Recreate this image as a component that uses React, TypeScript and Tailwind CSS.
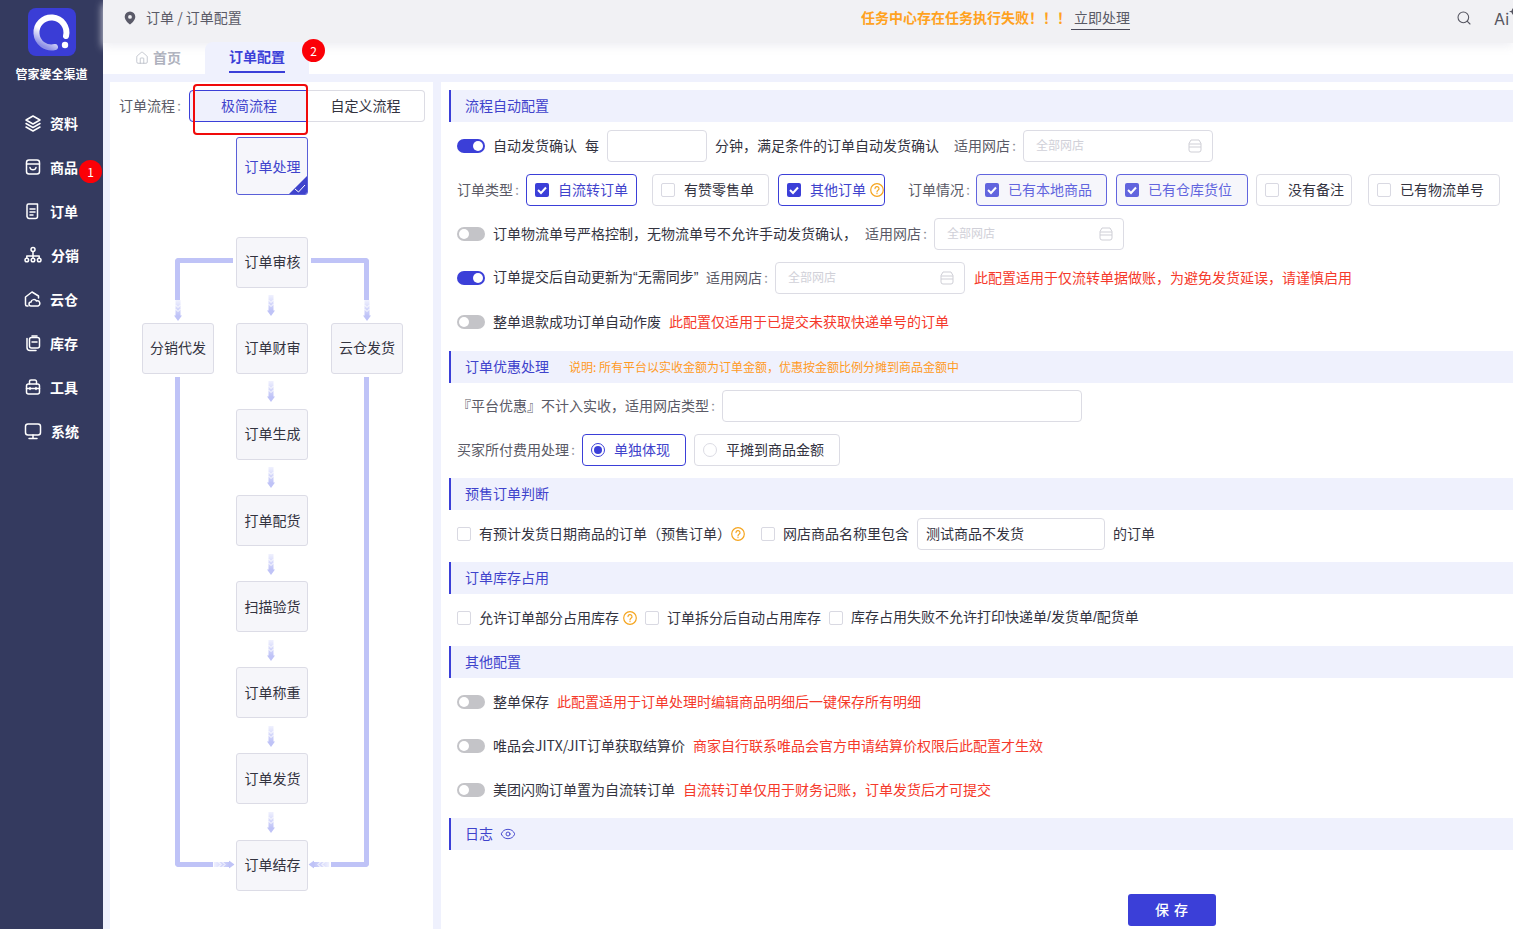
import React from "react";
import { Eye, House, Search } from "lucide-react";

const IC = "w-[18px] h-[18px] shrink-0";
const Logo = () => (
  <svg viewBox="0 0 48 48" className="w-12 h-12">
    <defs>
      <linearGradient id="lg" x1="0.8" y1="0.1" x2="0.3" y2="1">
        <stop offset="0" stopColor="#fff" />
        <stop offset="0.55" stopColor="#fff" />
        <stop offset="1" stopColor="#8d8fe6" />
      </linearGradient>
    </defs>
    <rect width="48" height="48" rx="8" fill="#3a3dd6" />
    <path d="M38 28A15 15 0 1 0 27 39" fill="none" stroke="url(#lg)" strokeWidth="6" strokeLinecap="round" />
    <circle cx="37" cy="37" r="3.2" fill="#fff" />
  </svg>
);

const icons: Record<string, React.ReactNode> = {
  资料: <><path d="M9 2 16 6 9 10 2 6Z" /><path d="M2 9.5 9 13.5 16 9.5" /><path d="M2 13 9 17 16 13" /></>,
  商品: <><rect x="2.5" y="2" width="13" height="14" rx="2.5" /><path d="M2.5 6H15.5" /><path d="M6 9.5C6.5 12.5 11.5 12.5 12 9.5" /></>,
  订单: <><path d="M4.5 2H13.5V14.5A2 2 0 0 1 11.5 16.5H5A2.5 2.5 0 0 1 3 14.5V3.5A1.5 1.5 0 0 1 4.5 2Z" /><path d="M6 7H11M6 10H11M6 13H9" /></>,
  分销: <><circle cx="9" cy="3.5" r="2" /><circle cx="2.8" cy="14" r="1.8" /><circle cx="9" cy="14" r="1.8" /><circle cx="15.2" cy="14" r="1.8" /><path d="M9 5.5V12M2.8 12V10H15.2V12" /></>,
  云仓: <><path d="M4 16H3A1.5 1.5 0 0 1 1.5 14.5V7L8 2 14.5 6V8" /><path d="M7 16A2 2 0 0 1 7 12 3 3 0 0 1 12.5 11 2.5 2.5 0 0 1 14 16Z" /></>,
  库存: <><path d="M3 4.5V13.5A3 3 0 0 0 6 16.5H12" /><rect x="5.5" y="3.5" width="10" height="10.5" rx="2" /><path d="M8 2H13M8 8H13" /></>,
  工具: <><rect x="2.5" y="6" width="13" height="10" rx="2" /><path d="M5.5 6V3.5A1.5 1.5 0 0 1 7 2H11A1.5 1.5 0 0 1 12.5 3.5V6" /><path d="M2.5 10.5H15.5M6 9.5V11.5M12 9.5V11.5" /></>,
  系统: <><rect x="1.5" y="2" width="15" height="11" rx="2.5" /><path d="M9 13V16M5 16.5H13" /></>,
};

function NavItem({ name, badge }: { name: string; badge?: boolean }) {
  const wide = name === "分销" || name === "系统";
  return (
    <div className={`relative flex items-center h-11 pl-[24px] ${wide ? "gap-[9px]" : "gap-2"}`}>
      <svg viewBox="0 0 18 18" className={IC} fill="none" stroke="#fff" strokeWidth="1.5" strokeLinejoin="round" strokeLinecap="round">
        {icons[name]}
      </svg>
      <span className="text-[14px] font-bold text-white">{name}</span>
      {badge && (
        <span className="absolute left-[79px] top-[15px] w-[23px] h-[23px] rounded-full bg-[#fb0007] text-white text-[12px] flex items-center justify-center">1</span>
      )}
    </div>
  );
}

function FlowArrow({ className }: { className: string }) {
  const id = React.useId();
  return (
    <svg viewBox="0 0 8 21" className={`absolute w-2 h-[21px] ${className}`}>
      <defs>
        <linearGradient id={id} x1="0" y1="0" x2="0" y2="1">
          <stop offset="0" stopColor="#f0f1fe" />
          <stop offset="0.75" stopColor="#bfc3f7" />
        </linearGradient>
      </defs>
      <path d="M1.5 0H6.5V15.5H8L4 21 0 15.5H1.5Z" fill={`url(#${id})`} />
      <path d="M1.5 5 4 7.5 6.5 5M1.5 9 4 11.5 6.5 9" fill="none" stroke="#fff" strokeWidth="1" />
    </svg>
  );
}

function Node({ label, className, pad = "pb-[2px]" }: { label: string; className: string; pad?: string }) {
  return (
    <div className={`absolute w-[72px] h-[51px] rounded-[3px] border border-[#dcdce6] bg-[#f6f6fa] flex items-center justify-center text-[14px] text-[#33333f] ${pad} ${className}`}>
      {label}
    </div>
  );
}

function Section({ children, className = "" }: { children: React.ReactNode; className?: string }) {
  return (
    <div className={`h-8 pb-[2px] border-l-2 border-[#3b3fd8] bg-[#eff1fd] pl-[14px] flex items-center text-[14px] text-[#3f43cc] ${className}`}>
      {children}
    </div>
  );
}

function Toggle({ on }: { on?: boolean }) {
  return (
    <span className={`relative ml-2 w-[28px] h-[14px] rounded-full shrink-0 ${on ? "bg-[#3b3fd8]" : "bg-[#c4c4c8]"}`}>
      <span className={`absolute top-[2px] w-[10px] h-[10px] rounded-full bg-white ${on ? "right-[2px]" : "left-[2px]"}`} />
    </span>
  );
}

function Check({ on, soft }: { on?: boolean; soft?: boolean }) {
  if (!on) return <div className="w-[14px] h-[14px] rounded-[2px] border border-[#d9d9e2] bg-white shrink-0" />;
  return (
    <div className={`w-[14px] h-[14px] rounded-[2px] shrink-0 flex items-center justify-center ${soft ? "bg-[#6265de]" : "bg-[#3b3fd8]"}`}>
      <svg viewBox="0 0 14 14" className="w-[14px] h-[14px]" fill="none" stroke="#fff" strokeWidth="2"><path d="M3 7 6 10 11 4.5" /></svg>
    </div>
  );
}

const HelpIcon = ({ className }: { className: string }) => (
  <svg viewBox="0 0 14 14" className={`w-[14px] h-[14px] shrink-0 ${className}`} fill="none" stroke="#f5a51f" strokeWidth="1.2">
    <circle cx="7" cy="7" r="6.3" />
    <path d="M5 5.6A2 2 0 1 1 8 7.3C7.3 7.7 7 8 7 8.9" strokeLinecap="round" />
    <circle cx="7" cy="10.6" r="0.7" fill="#f5a51f" stroke="none" />
  </svg>
);

function CheckBox({ label, w, on, soft, help, ml }: { label: string; w: string; on?: boolean; soft?: boolean; help?: boolean; ml: string }) {
  const tone = soft
    ? "border-[#6265de] bg-[#f6f6fb] text-[#6265de]"
    : on
      ? "border-[#3b3fd8] bg-white text-[#3f43cc]"
      : "border-[#dcdce4] bg-white text-[#33333f]";
  return (
    <div className={`h-8 rounded-[4px] border pl-[8px] flex items-center shrink-0 ${w} ${ml} ${tone}`}>
      <Check on={on} soft={soft} />
      <span className="ml-[9px] pb-[2px]">{label}</span>
      {help && <HelpIcon className="ml-[4px]" />}
    </div>
  );
}

const Store = () => (
  <svg viewBox="0 0 14 14" className="w-[14px] h-[14px]" fill="none" stroke="#cfcfd6" strokeWidth="1">
    <path d="M3 1H11L13 4.5V11A2 2 0 0 1 11 13H3A2 2 0 0 1 1 11V4.5Z" />
    <path d="M1 5H13M1 8H13" />
  </svg>
);

function ShopSelect({ ml }: { ml: string }) {
  return (
    <div className={`w-[190px] h-8 rounded-[4px] border border-[#dcdce4] bg-white pl-3 pr-[10px] flex items-center justify-between shrink-0 ${ml}`}>
      <span className="text-[12px] text-[#d0d0d8] pb-[2px]">全部网店</span>
      <Store />
    </div>
  );
}

const Row = ({ children }: { children: React.ReactNode }) => (
  <div className="h-11 flex items-center whitespace-nowrap text-[14px] text-[#33333f] [&>span]:pb-[2px]">{children}</div>
);
const Warn = ({ children, ml }: { children: React.ReactNode; ml: string }) => (
  <span className={`text-[#f5392b] ${ml}`}>{children}</span>
);
const Colon = () => <span className="ml-[2px] font-['Inter',sans-serif] text-[#8a8a94]">:</span>;
const Label = ({ children, className }: { children: React.ReactNode; className: string }) => (
  <span className={`text-[#5a5a66] shrink-0 ${className}`}>{children}<Colon /></span>
);
const Slash = () => <span className="font-['Liberation_Sans',sans-serif]">/</span>;

export default function App() {
  return (
    <div className="relative w-[1513px] h-[929px] overflow-hidden flex bg-[#eff1fd] whitespace-nowrap font-['Noto_Sans_CJK_SC','Liberation_Sans',sans-serif]">
      <aside className="w-[103px] shrink-0 bg-[#343a5f] flex flex-col">
        <div className="flex flex-col items-center pt-2">
          <Logo />
          <div className="mt-[9px] text-[12px] leading-[18px] font-bold text-white">管家婆全渠道</div>
        </div>
        <nav className="mt-[18px]">
          {["资料", "商品", "订单", "分销", "云仓", "库存", "工具", "系统"].map((n) => (
            <NavItem key={n} name={n} badge={n === "商品"} />
          ))}
        </nav>
      </aside>

      <main className="flex-1 min-w-0 flex flex-col">
        <header className="relative z-10 h-[43px] shrink-0 bg-[#f1f1f4] flex items-center pl-[20px] pb-[8px] text-[14px] shadow-[0_4px_8px_rgba(240,240,244,0.9)] overflow-x-clip">
          <svg viewBox="0 0 14 14" className="w-[14px] h-[14px] shrink-0">
            <path fillRule="evenodd" fill="#5a5a68" d="M7 .5A5.3 5.3 0 0 1 12.3 5.8C12.3 9 8.7 12.4 7 13.5 5.3 12.4 1.7 9 1.7 5.8A5.3 5.3 0 0 1 7 .5ZM7 4A1.9 1.9 0 1 0 7 7.8 1.9 1.9 0 0 0 7 4Z" />
          </svg>
          <span className="ml-[9px] w-[95px] text-[#5a5a66]">订单 / 订单配置</span>
          <span className="ml-[620px] font-bold text-[#ffa21f] w-[210px]">任务中心存在任务执行失败！！！</span>
          <span className="self-start mt-[7px] h-[23px] leading-[20px] pl-[3px] w-[60px] text-[#5a5a66] border-b border-[#4a4a5a]">立即处理</span>
          <Search size={16} strokeWidth={1.6} className="ml-[326px] text-[#555560] shrink-0" />
          <span className="ml-[22px] mt-[2px] text-[16px] leading-none text-[#555560] font-['Inter',sans-serif]">Ai</span>
          <svg viewBox="0 0 8 8" className="w-[7px] h-[7px] shrink-0 mb-[12px]"><path d="M4 0 5 3 8 4 5 5 4 8 3 5 0 4 3 3Z" fill="#555560" /></svg>
        </header>

        <div className="h-[31px] shrink-0 bg-white flex items-end">
          <div className="flex items-center gap-[4px] pb-[2px] ml-[32px] w-[70px] h-[31px] text-[14px] font-bold text-[#aeb1bd]">
            <House size={14} strokeWidth={1.2} />
            <span>首页</span>
          </div>
          <div className="relative z-20 w-[104px] h-[32px] rounded-t-[8px] bg-[#eff1fd] flex justify-center">
            <span className="h-[31px] leading-[29px] text-[14px] font-bold text-[#3b3fd8] border-b-2 border-[#3b3fd8]">订单配置</span>
            <span className="absolute left-[97px] -top-[3px] w-[23px] h-[23px] rounded-full bg-[#fb0007] text-white text-[12px] flex items-center justify-center">2</span>
          </div>
        </div>

        <div className="flex-1 min-h-0 flex gap-2 pl-[7px] pt-2">
          <section className="relative w-[323px] shrink-0 bg-white">
            <div className="flex items-center h-8 mt-2 pl-[9px] text-[14px]">
              <span className="w-[70px] pb-[2px] text-[#5a5a66] shrink-0">订单流程<Colon /></span>
              <div className="w-[118px] h-8 pb-[2px] pl-[2px] rounded-l-[4px] border border-[#3b3fd8] bg-[#eff1fd] text-[#3f43cc] flex items-center justify-center">极简流程</div>
              <div className="w-[118px] h-8 pb-[2px] rounded-r-[4px] border border-l-0 border-[#dcdce4] text-[#33333f] flex items-center justify-center">自定义流程</div>
            </div>
            <div className="absolute left-[83px] top-[2px] w-[115px] h-[51px] rounded-[4px] border-2 border-[#f00a0a]" />

            <div className="relative h-[760px] mt-2">
              <div className="absolute left-[65px] top-[128px] w-[58px] h-[42px] border-l-[5px] border-t-[5px] border-[#bfc3f7] rounded-tl-[4px]" />
              <div className="absolute left-[201px] top-[128px] w-[58px] h-[42px] border-r-[5px] border-t-[5px] border-[#bfc3f7] rounded-tr-[4px]" />
              <div className="absolute left-[65px] top-[247px] w-[38px] h-[490px] border-l-[5px] border-b-[5px] border-[#bfc3f7] rounded-bl-[4px]" />
              <div className="absolute left-[221px] top-[247px] w-[38px] h-[490px] border-r-[5px] border-b-[5px] border-[#bfc3f7] rounded-br-[4px]" />

              <div className="absolute left-[126px] top-[7px] w-[72px] h-[58px] pl-[1px] rounded-[3px] border border-[#5a5fd8] bg-[#f6f6fb] flex items-center justify-center text-[14px] text-[#3f43cc] overflow-hidden">
                订单处理
                <svg viewBox="0 0 18 18" className="absolute right-0 bottom-0 w-[18px] h-[18px]">
                  <path d="M18 0V18H0Z" fill="#3f43cc" />
                  <path d="M6 13 9.5 16 16 9" fill="none" stroke="#fff" strokeWidth="1" />
                </svg>
              </div>
              <Node label="订单审核" className="left-[126px] top-[107px] pl-[1px]" />
              <Node label="分销代发" className="left-[32px] top-[193px]" />
              <Node label="订单财审" className="left-[126px] top-[193px] pl-[1px]" />
              <Node label="云仓发货" className="left-[221px] top-[193px]" />
              <Node label="订单生成" className="left-[126px] top-[279px] pl-[1px]" />
              <Node label="打单配货" pad="pb-0" className="left-[126px] top-[365px] pl-[1px]" />
              <Node label="扫描验货" pad="pb-0" className="left-[126px] top-[451px] pl-[1px]" />
              <Node label="订单称重" pad="pb-0" className="left-[126px] top-[537px] pl-[1px]" />
              <Node label="订单发货" pad="pb-0" className="left-[126px] top-[623px] pl-[1px]" />
              <Node label="订单结存" className="left-[126px] top-[710px] pl-[1px]" />

              <FlowArrow className="left-[157px] top-[165px]" />
              <FlowArrow className="left-[157px] top-[251px]" />
              <FlowArrow className="left-[157px] top-[337px]" />
              <FlowArrow className="left-[157px] top-[424px]" />
              <FlowArrow className="left-[157px] top-[510px]" />
              <FlowArrow className="left-[157px] top-[596px]" />
              <FlowArrow className="left-[157px] top-[682px]" />
              <FlowArrow className="left-[64px] top-[170px]" />
              <FlowArrow className="left-[253px] top-[170px]" />
              <FlowArrow className="left-[110px] top-[724px] -rotate-90" />
              <FlowArrow className="left-[205px] top-[724px] rotate-90" />
            </div>
          </section>

          <section className="flex-1 min-w-0 bg-white pl-2 pt-2">
            <Section>流程自动配置</Section>
            <div className="mt-[2px]">
              <Row>
                <Toggle on />
                <span className="ml-2">自动发货确认</span>
                <span className="ml-2">每</span>
                <span className="ml-2 w-[100px] h-8 rounded-[4px] border border-[#dcdce4] shrink-0" />
                <span className="ml-2">分钟，满足条件的订单自动发货确认</span>
                <Label className="ml-[15px] w-[69px]">适用网店</Label>
                <ShopSelect ml="" />
              </Row>
              <Row>
                <Label className="ml-[8px] w-[69px]">订单类型</Label>
                <CheckBox label="自流转订单" w="w-[111px]" on ml="" />
                <CheckBox label="有赞零售单" w="w-[117px]" ml="ml-[15px]" />
                <CheckBox label="其他订单" w="w-[107px]" on help ml="ml-[9px]" />
                <Label className="ml-[23px] w-[68px]">订单情况</Label>
                <CheckBox label="已有本地商品" w="w-[131px]" on soft ml="" />
                <CheckBox label="已有仓库货位" w="w-[132px]" on soft ml="ml-[9px]" />
                <CheckBox label="没有备注" w="w-[96px]" ml="ml-2" />
                <CheckBox label="已有物流单号" w="w-[132px]" ml="ml-4" />
              </Row>
              <Row>
                <Toggle />
                <span className="ml-2">订单物流单号严格控制，无物流单号不允许手动发货确认，</span>
                <Label className="ml-[8px] w-[69px]">适用网店</Label>
                <ShopSelect ml="" />
              </Row>
              <Row>
                <Toggle on />
                <span className="ml-2 w-[205px]">
                  订单提交后自动更新为<span className="font-['Liberation_Sans',sans-serif]">“</span>无需同步<span className="font-['Liberation_Sans',sans-serif]">”</span>
                </span>
                <Label className="ml-[8px] w-[69px]">适用网店</Label>
                <ShopSelect ml="" />
                <Warn ml="ml-[9px]">此配置适用于仅流转单据做账，为避免发货延误，请谨慎启用</Warn>
              </Row>
              <Row>
                <Toggle />
                <span className="ml-2">整单退款成功订单自动作废</span>
                <Warn ml="ml-2">此配置仅适用于已提交未获取快递单号的订单</Warn>
              </Row>
            </div>

            <Section className="mt-[7px]">
              订单优惠处理
              <span className="ml-5 mt-[2px] text-[12px] text-[#ff9a1f]">说明: 所有平台以实收金额为订单金额，优惠按金额比例分摊到商品金额中</span>
            </Section>
            <div className="mt-[1px]">
              <Row>
                <Label className="ml-[8px] w-[265px]">『平台优惠』不计入实收，适用网店类型</Label>
                <span className="w-[360px] h-8 rounded-[4px] border border-[#dcdce4]" />
              </Row>
              <Row>
                <Label className="ml-[8px] w-[125px]">买家所付费用处理</Label>
                <div className="w-[104px] h-8 rounded-[4px] border border-[#3b3fd8] pl-[8px] flex items-center text-[#3f43cc]">
                  <div className="w-[14px] h-[14px] rounded-full border border-[#3b3fd8] flex items-center justify-center">
                    <div className="w-2 h-2 rounded-full bg-[#3b3fd8]" />
                  </div>
                  <span className="ml-[9px] pb-[2px]">单独体现</span>
                </div>
                <div className="ml-2 w-[146px] h-8 rounded-[4px] border border-[#dcdce4] pl-[8px] flex items-center">
                  <div className="w-[14px] h-[14px] rounded-full border border-[#dcdce4]" />
                  <span className="ml-[9px] pb-[2px]">平摊到商品金额</span>
                </div>
              </Row>
            </div>

            <Section className="mt-[6px]">预售订单判断</Section>
            <div className="mt-[2px]">
              <Row>
                <div className="ml-2"><Check /></div>
                <span className="ml-2">有预计发货日期商品的订单（预售订单）</span>
                <HelpIcon className="" />
                <div className="ml-4"><Check /></div>
                <span className="ml-2">网店商品名称里包含</span>
                <span className="ml-2 w-[188px] h-8 rounded-[4px] border border-[#dcdce4] pl-[8px] flex items-center">测试商品不发货</span>
                <span className="ml-2">的订单</span>
              </Row>
            </div>

            <Section className="mt-[6px]">订单库存占用</Section>
            <div className="mt-[2px]">
              <Row>
                <div className="ml-2"><Check /></div>
                <span className="ml-2">允许订单部分占用库存</span>
                <HelpIcon className="ml-[4px]" />
                <div className="ml-2"><Check /></div>
                <span className="ml-2">订单拆分后自动占用库存</span>
                <div className="ml-2"><Check /></div>
                <span className="ml-2">库存占用失败不允许打印快递单<Slash />发货单<Slash />配货单</span>
              </Row>
            </div>

            <Section className="mt-[6px]">其他配置</Section>
            <div className="mt-[2px]">
              <Row>
                <Toggle />
                <span className="ml-2">整单保存</span>
                <Warn ml="ml-2">此配置适用于订单处理时编辑商品明细后一键保存所有明细</Warn>
              </Row>
              <Row>
                <Toggle />
                <span className="ml-2">唯品会JITX/JIT订单获取结算价</span>
                <Warn ml="ml-2">商家自行联系唯品会官方申请结算价权限后此配置才生效</Warn>
              </Row>
              <Row>
                <Toggle />
                <span className="ml-2">美团闪购订单置为自流转订单</span>
                <Warn ml="ml-2">自流转订单仅用于财务记账，订单发货后才可提交</Warn>
              </Row>
            </div>

            <Section className="mt-[6px]">
              日志
              <Eye size={16} strokeWidth={1.4} className="ml-[7px] mt-[2px]" />
            </Section>

            <button className="block ml-[679px] mt-[44px] w-[88px] h-8 pb-[2px] rounded-[3px] bg-[#3b3fd8] text-white text-[14px] font-medium tracking-[1px]">保 存</button>
          </section>
        </div>
      </main>
    </div>
  );
}
